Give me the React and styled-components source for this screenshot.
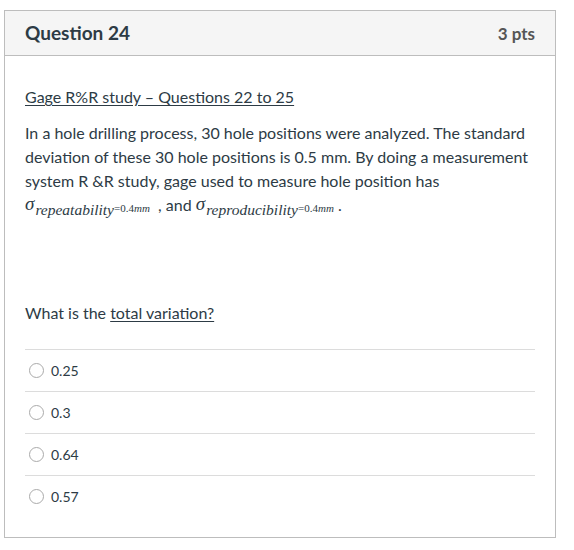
import React from "react";
import styled, { createGlobalStyle } from "styled-components";

const GlobalStyle = createGlobalStyle`
  body {
    margin: 0;
    background: #fff;
    font-family: Lato, "Liberation Sans", sans-serif;
    color: #2d3b45;
  }
`;

const answers = ["0.25", "0.3", "0.64", "0.57"];

const Page = styled.div`
  padding: 10px 0 0 4px;
`;

const Card = styled.div`
  width: 552px;
  height: 528px;
  box-sizing: border-box;
  border: 1px solid #bdbdbd;
`;

const Header = styled.div`
  display: flex;
  justify-content: space-between;
  align-items: center;
  height: 44px;
  padding: 0 20px;
  background: #f5f5f5;
  border-bottom: 1px solid #bdbdbd;
`;

const Title = styled.span`
  font-weight: 700;
  font-size: 19px;
  color: #2d3b45;
  position: relative;
  top: -1px;
`;

const Points = styled.span`
  font-weight: 700;
  font-size: 17px;
  color: #555;
`;

const Body = styled.div`
  padding: 29px 20px 0;
  font-size: 16px;
  line-height: 24px;
  color: #2d3b45;
`;

const Para = styled.p`
  margin: 0 0 ${p => p.$after || 0}px;
`;

const Under = styled.span`
  text-decoration: underline;
  text-underline-offset: 2px;
`;

const Sigma = styled.span`
  font-family: "Liberation Serif", serif;
  font-style: italic;
  font-size: 19px;
  line-height: 0;
  position: relative;
  top: -1px;
`;

const Sub = styled.span`
  font-family: "Liberation Serif", serif;
  font-style: italic;
  font-size: 15.5px;
  line-height: 0;
  position: relative;
  top: 4px;
  margin-left: 1px;
`;

const Tiny = styled.span`
  font-family: "Liberation Serif", serif;
  font-size: 11px;
  line-height: 0;
  position: relative;
  top: 1px;
`;

const TinyIt = styled.span`
  font-style: italic;
`;

const List = styled.div`
  margin-top: 24px;
`;

const Answer = styled.label`
  display: flex;
  align-items: center;
  height: 41px;
  border-top: 1px solid #dcdcdc;
  padding-left: 4px;
  font-size: 14px;
  color: #2d3b45;
`;

const Radio = styled.span`
  width: 13px;
  height: 13px;
  border: 1px solid #aaa;
  border-radius: 50%;
  margin-right: 7px;
  background: #fff;
`;

function SigmaTerm({ name }) {
  return (
    <>
      <Sigma>σ</Sigma>
      <Sub>{name}</Sub>
      <Tiny>
        =0.4<TinyIt>mm</TinyIt>
      </Tiny>
    </>
  );
}

export default function App() {
  return (
    <Page>
      <GlobalStyle />
      <Card>
        <Header>
          <Title>Question 24</Title>
          <Points>3 pts</Points>
        </Header>
        <Body>
          <Para $after={12}>
            <Under>Gage R%R study – Questions 22 to 25</Under>
          </Para>
          <Para $after={84}>
            In a hole drilling process, 30 hole positions were analyzed. The standard
            deviation of these 30 hole positions is 0.5 mm. By doing a measurement
            system R &amp;R study, gage used to measure hole position has{" "}
            <br />
            <SigmaTerm name="repeatability" />
            {"  "}&nbsp;, and <SigmaTerm name="reproducibility" /> .
          </Para>
          <Para>
            What is the <Under>total variation?</Under>
          </Para>
          <List>
            {answers.map(a => (
              <Answer key={a}>
                <Radio />
                {a}
              </Answer>
            ))}
          </List>
        </Body>
      </Card>
    </Page>
  );
}
